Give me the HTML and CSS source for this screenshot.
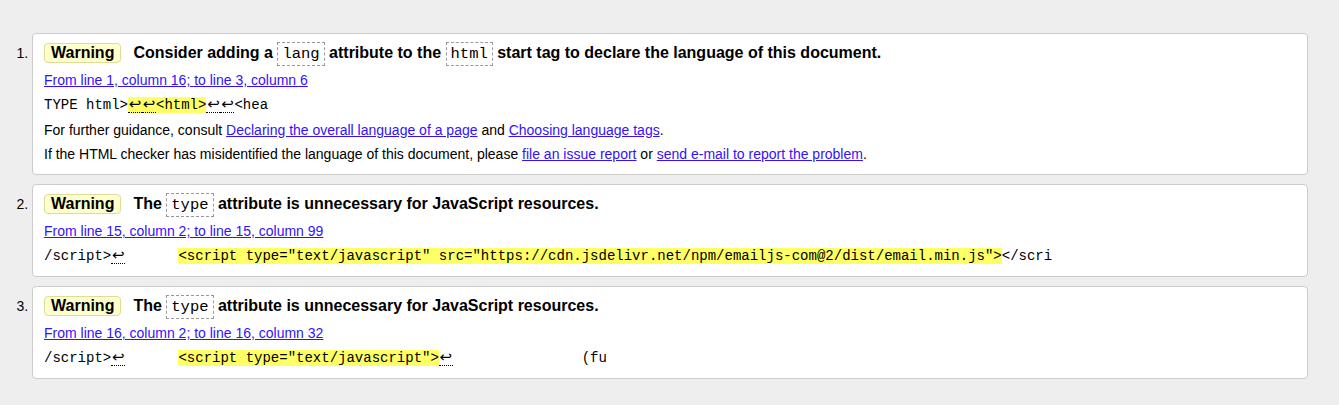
FILE: index.html
```html
<!DOCTYPE html>
<html lang="en">
<head>
<meta charset="utf-8">
<title>Messages</title>
<link rel="stylesheet" href="styles.css">
</head>
<body>
<ol class="messages">
  <li class="msg">
    <p class="title"><strong class="badge">Warning</strong> <span>Consider adding a <code>lang</code> attribute to the <code>html</code> start tag to declare the language of this document.</span></p>
    <p class="loc"><a href="#">From line 1, column 16; to line 3, column 6</a></p>
    <p class="extract"><code>TYPE html&gt;<mark><b class="lf">↩</b><b class="lf">↩</b>&lt;html&gt;</mark><b class="lf">↩</b><b class="lf">↩</b>&lt;hea</code></p>
    <p class="note">For further guidance, consult <a href="#">Declaring the overall language of a page</a> and <a href="#">Choosing language tags</a>.</p>
    <p class="note">If the HTML checker has misidentified the language of this document, please <a href="#">file an issue report</a> or <a href="#">send e-mail to report the problem</a>.</p>
  </li>
  <li class="msg">
    <p class="title"><strong class="badge">Warning</strong> <span>The <code>type</code> attribute is unnecessary for JavaScript resources.</span></p>
    <p class="loc"><a href="#">From line 15, column 2; to line 15, column 99</a></p>
    <p class="extract"><code>/script&gt;<b class="lf">↩</b>	<mark>&lt;script type="text/javascript" src="https://cdn.jsdelivr.net/npm/emailjs-com@2/dist/email.min.js"&gt;</mark>&lt;/scri</code></p>
  </li>
  <li class="msg">
    <p class="title"><strong class="badge">Warning</strong> <span>The <code>type</code> attribute is unnecessary for JavaScript resources.</span></p>
    <p class="loc"><a href="#">From line 16, column 2; to line 16, column 32</a></p>
    <p class="extract"><code>/script&gt;<b class="lf">↩</b>	<mark>&lt;script type="text/javascript"&gt;</mark><b class="lf">↩</b>		(fu</code></p>
  </li>
</ol>
</body>
</html>
```
FILE: styles.css
```css
html, body {
  margin: 0;
  padding: 0;
}
body {
  background: #eeeeee;
  font-family: "Liberation Sans", Arial, sans-serif;
  font-size: 14px;
  color: #000;
}
.messages {
  margin: 33px 31px 0 0;
  padding: 0 0 0 32px;
}
.msg {
  background: #fff;
  border: 1px solid #cccccc;
  border-radius: 4px;
  padding: 9px 11px 10px 11px;
  margin-bottom: 9px;
}
.msg::marker {
  font-size: 14px;
}
.msg p {
  margin: 5px 0 0 0;
  line-height: 20px;
}
.msg p.title {
  margin: 0;
  height: 20px;
  line-height: 20px;
  font-size: 16px;
  font-weight: bold;
  display: flex;
  align-items: center;
  gap: 12px;
}
.msg p.loc {
  margin-top: 7px;
}
.msg p.note {
  margin-top: 4.5px;
}
.badge {
  display: inline-block;
  background: #ffffcc;
  border: 1px solid #dddd99;
  border-radius: 4px;
  padding: 0 6px;
  height: 18px;
  line-height: 18px;
  font-weight: bold;
}
.title code {
  font-family: "Liberation Mono", "Courier New", monospace;
  font-weight: normal;
  font-size: 15.5px;
  border: 1px dashed #999999;
  padding: 2px 4px;
}
a {
  color: #3311ff;
  text-decoration: underline;
}
.msg p.extract {
  font-family: "Liberation Mono", "Courier New", monospace;
  font-size: 14px;
  white-space: pre;
  tab-size: 8;
}
.extract code {
  font-family: inherit;
  font-size: inherit;
}
mark {
  background: #ffff66;
  color: #000;
}
.lf {
  display: inline-block;
  width: 14px;
  text-align: center;
  font-weight: normal;
  font-family: "DejaVu Sans", sans-serif;
  font-size: 15px;
  line-height: 15px;
  border-bottom: 1px dotted #000;
}
```
